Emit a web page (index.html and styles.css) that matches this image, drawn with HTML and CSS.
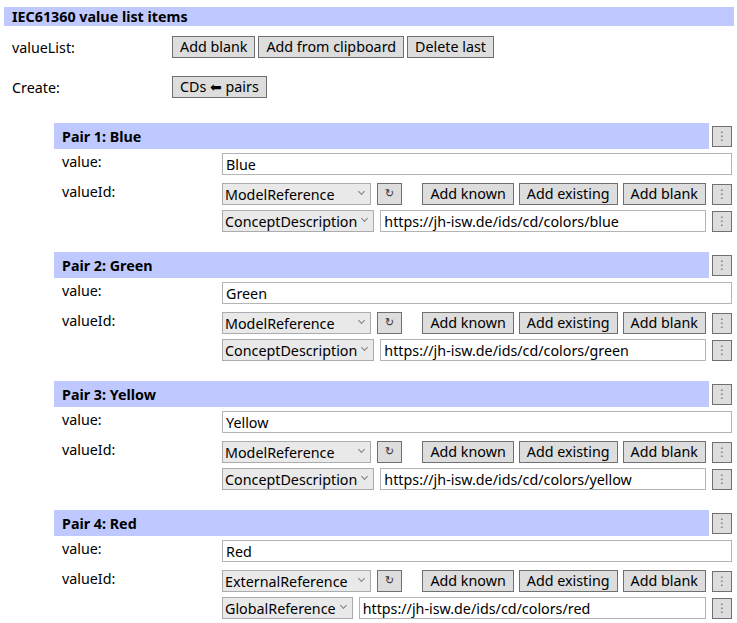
FILE: index.html
```html
<!DOCTYPE html>
<html>
<head>
<meta charset="utf-8">
<link rel="stylesheet" href="styles.css">
</head>
<body>
<div class="page">
  <div class="band main-band">IEC61360 value list items</div>
  <div class="top-row first">
    <div class="top-label">valueList:</div>
    <div class="btns">
      <button class="btn">Add blank</button>
      <button class="btn">Add from clipboard</button>
      <button class="btn">Delete last</button>
    </div>
  </div>
  <div class="top-row second">
    <div class="top-label">Create:</div>
    <div class="btns">
      <button class="btn">CDs <span class="arrow">⬅</span> pairs</button>
    </div>
  </div>

  <div class="pairs">
    <div class="pair">
      <div class="pair-head"><div class="band pair-band">Pair 1: Blue</div><button class="kebab">⋮</button></div>
      <div class="frow r-value"><div class="lbl">value:</div><div class="fld"><div class="input full">Blue</div></div></div>
      <div class="frow r-id"><div class="lbl">valueId:</div><div class="fld">
        <div class="combo type">ModelReference<span class="chev"></span></div>
        <button class="btn refresh">↻</button>
        <div class="spacer"></div>
        <button class="btn">Add known</button>
        <button class="btn">Add existing</button>
        <button class="btn">Add blank</button>
        <button class="kebab">⋮</button>
      </div></div>
      <div class="frow r-key"><div class="lbl"></div><div class="fld">
        <div class="combo key">ConceptDescription<span class="chev"></span></div>
        <div class="input url">https://jh-isw.de/ids/cd/colors/blue</div>
        <button class="kebab">⋮</button>
      </div></div>
    </div>

    <div class="pair">
      <div class="pair-head"><div class="band pair-band">Pair 2: Green</div><button class="kebab">⋮</button></div>
      <div class="frow r-value"><div class="lbl">value:</div><div class="fld"><div class="input full">Green</div></div></div>
      <div class="frow r-id"><div class="lbl">valueId:</div><div class="fld">
        <div class="combo type">ModelReference<span class="chev"></span></div>
        <button class="btn refresh">↻</button>
        <div class="spacer"></div>
        <button class="btn">Add known</button>
        <button class="btn">Add existing</button>
        <button class="btn">Add blank</button>
        <button class="kebab">⋮</button>
      </div></div>
      <div class="frow r-key"><div class="lbl"></div><div class="fld">
        <div class="combo key">ConceptDescription<span class="chev"></span></div>
        <div class="input url">https://jh-isw.de/ids/cd/colors/green</div>
        <button class="kebab">⋮</button>
      </div></div>
    </div>

    <div class="pair">
      <div class="pair-head"><div class="band pair-band">Pair 3: Yellow</div><button class="kebab">⋮</button></div>
      <div class="frow r-value"><div class="lbl">value:</div><div class="fld"><div class="input full">Yellow</div></div></div>
      <div class="frow r-id"><div class="lbl">valueId:</div><div class="fld">
        <div class="combo type">ModelReference<span class="chev"></span></div>
        <button class="btn refresh">↻</button>
        <div class="spacer"></div>
        <button class="btn">Add known</button>
        <button class="btn">Add existing</button>
        <button class="btn">Add blank</button>
        <button class="kebab">⋮</button>
      </div></div>
      <div class="frow r-key"><div class="lbl"></div><div class="fld">
        <div class="combo key">ConceptDescription<span class="chev"></span></div>
        <div class="input url">https://jh-isw.de/ids/cd/colors/yellow</div>
        <button class="kebab">⋮</button>
      </div></div>
    </div>

    <div class="pair">
      <div class="pair-head"><div class="band pair-band">Pair 4: Red</div><button class="kebab">⋮</button></div>
      <div class="frow r-value"><div class="lbl">value:</div><div class="fld"><div class="input full">Red</div></div></div>
      <div class="frow r-id"><div class="lbl">valueId:</div><div class="fld">
        <div class="combo type">ExternalReference<span class="chev"></span></div>
        <button class="btn refresh">↻</button>
        <div class="spacer"></div>
        <button class="btn">Add known</button>
        <button class="btn">Add existing</button>
        <button class="btn">Add blank</button>
        <button class="kebab">⋮</button>
      </div></div>
      <div class="frow r-key"><div class="lbl"></div><div class="fld">
        <div class="combo key">GlobalReference<span class="chev"></span></div>
        <div class="input url">https://jh-isw.de/ids/cd/colors/red</div>
        <button class="kebab">⋮</button>
      </div></div>
    </div>
  </div>
</div>
</body>
</html>
```

FILE: styles.css
```css
html, body {
  margin: 0;
  padding: 0;
  background: #ffffff;
}
body {
  font-family: "Noto Sans", "Open Sans", sans-serif;
  font-size: 14.3px;
  color: #000000;
}
.page {
  width: 737px;
  padding-top: 7px;
}
.band {
  background: #bfc9ff;
  font-weight: bold;
  display: flex;
  align-items: center;
}
.main-band {
  margin-left: 4px;
  width: 730px;
  height: 19px;
  padding-left: 8px;
  box-sizing: border-box;
}
.top-row {
  display: flex;
  align-items: center;
  height: 22px;
}
.top-row.first { margin-top: 10px; }
.top-row.second { margin-top: 18px; }
.top-label {
  width: 160px;
  padding-left: 12px;
}
.btns {
  display: flex;
  gap: 3px;
}
.btns .btn { padding: 0 7px; }
button {
  font-family: inherit;
  font-size: 14.3px;
  color: #000;
  margin: 0;
}
.btn {
  height: 22px;
  padding: 0 7px;
  background: #dddddd;
  border: 1px solid #707070;
  border-radius: 0;
  box-sizing: border-box;
  line-height: 18px;
  white-space: nowrap;
}
.arrow {
  font-family: "DejaVu Sans", sans-serif;
  font-size: 14px;
  line-height: 14px;
}
.pairs {
  margin-top: 25px;
  margin-left: 54px;
  width: 678px;
}
.pair {
  margin-bottom: 20px;
}
.pair-head {
  display: flex;
  align-items: center;
  height: 26px;
  gap: 3px;
}
.pair-band {
  flex: 1;
  height: 26px;
  padding-left: 8px;
}
.kebab {
  width: 20px;
  height: 21px;
  padding: 0;
  background: #dddddd;
  border: 1px solid #707070;
  border-radius: 0;
  box-sizing: border-box;
  color: #707070;
  font-family: "DejaVu Sans", sans-serif;
  font-size: 12px;
  line-height: 17px;
  flex: none;
}
.frow {
  display: flex;
  height: 22px;
}
.r-value { margin-top: 4px; }
.r-id { margin-top: 8px; }
.r-key { margin-top: 5px; }
.lbl {
  width: 160px;
  padding-left: 8px;
  flex: none;
  line-height: 18px;
}
.fld {
  flex: 1;
  display: flex;
  align-items: center;
  gap: 6px;
}
.input {
  height: 22px;
  box-sizing: border-box;
  border: 1px solid #b4b4b4;
  background: #fff;
  padding: 0 3px;
  display: flex;
  align-items: center;
  white-space: nowrap;
}
.full { flex: 1; }
.url { flex: 1; }
.combo {
  height: 22px;
  box-sizing: border-box;
  border: 1px solid #acacac;
  background: #e9e9e9;
  padding: 0 3px 0 2px;
  display: flex;
  align-items: center;
  justify-content: space-between;
  white-space: nowrap;
  flex: none;
}
.combo.type { width: 149px; }
.combo.key { gap: 5px; }
.chev {
  width: 4px;
  height: 4px;
  border-right: 1px solid #808080;
  border-bottom: 1px solid #808080;
  transform: rotate(45deg);
  margin: 0 3px 5px 0;
}
.refresh {
  width: 25px;
  padding: 0;
  color: #333;
  font-family: "DejaVu Sans", sans-serif;
  font-size: 11px;
}
.spacer { flex: 1; }
.r-id .btn:not(.refresh) { margin-left: -1px; }
```
